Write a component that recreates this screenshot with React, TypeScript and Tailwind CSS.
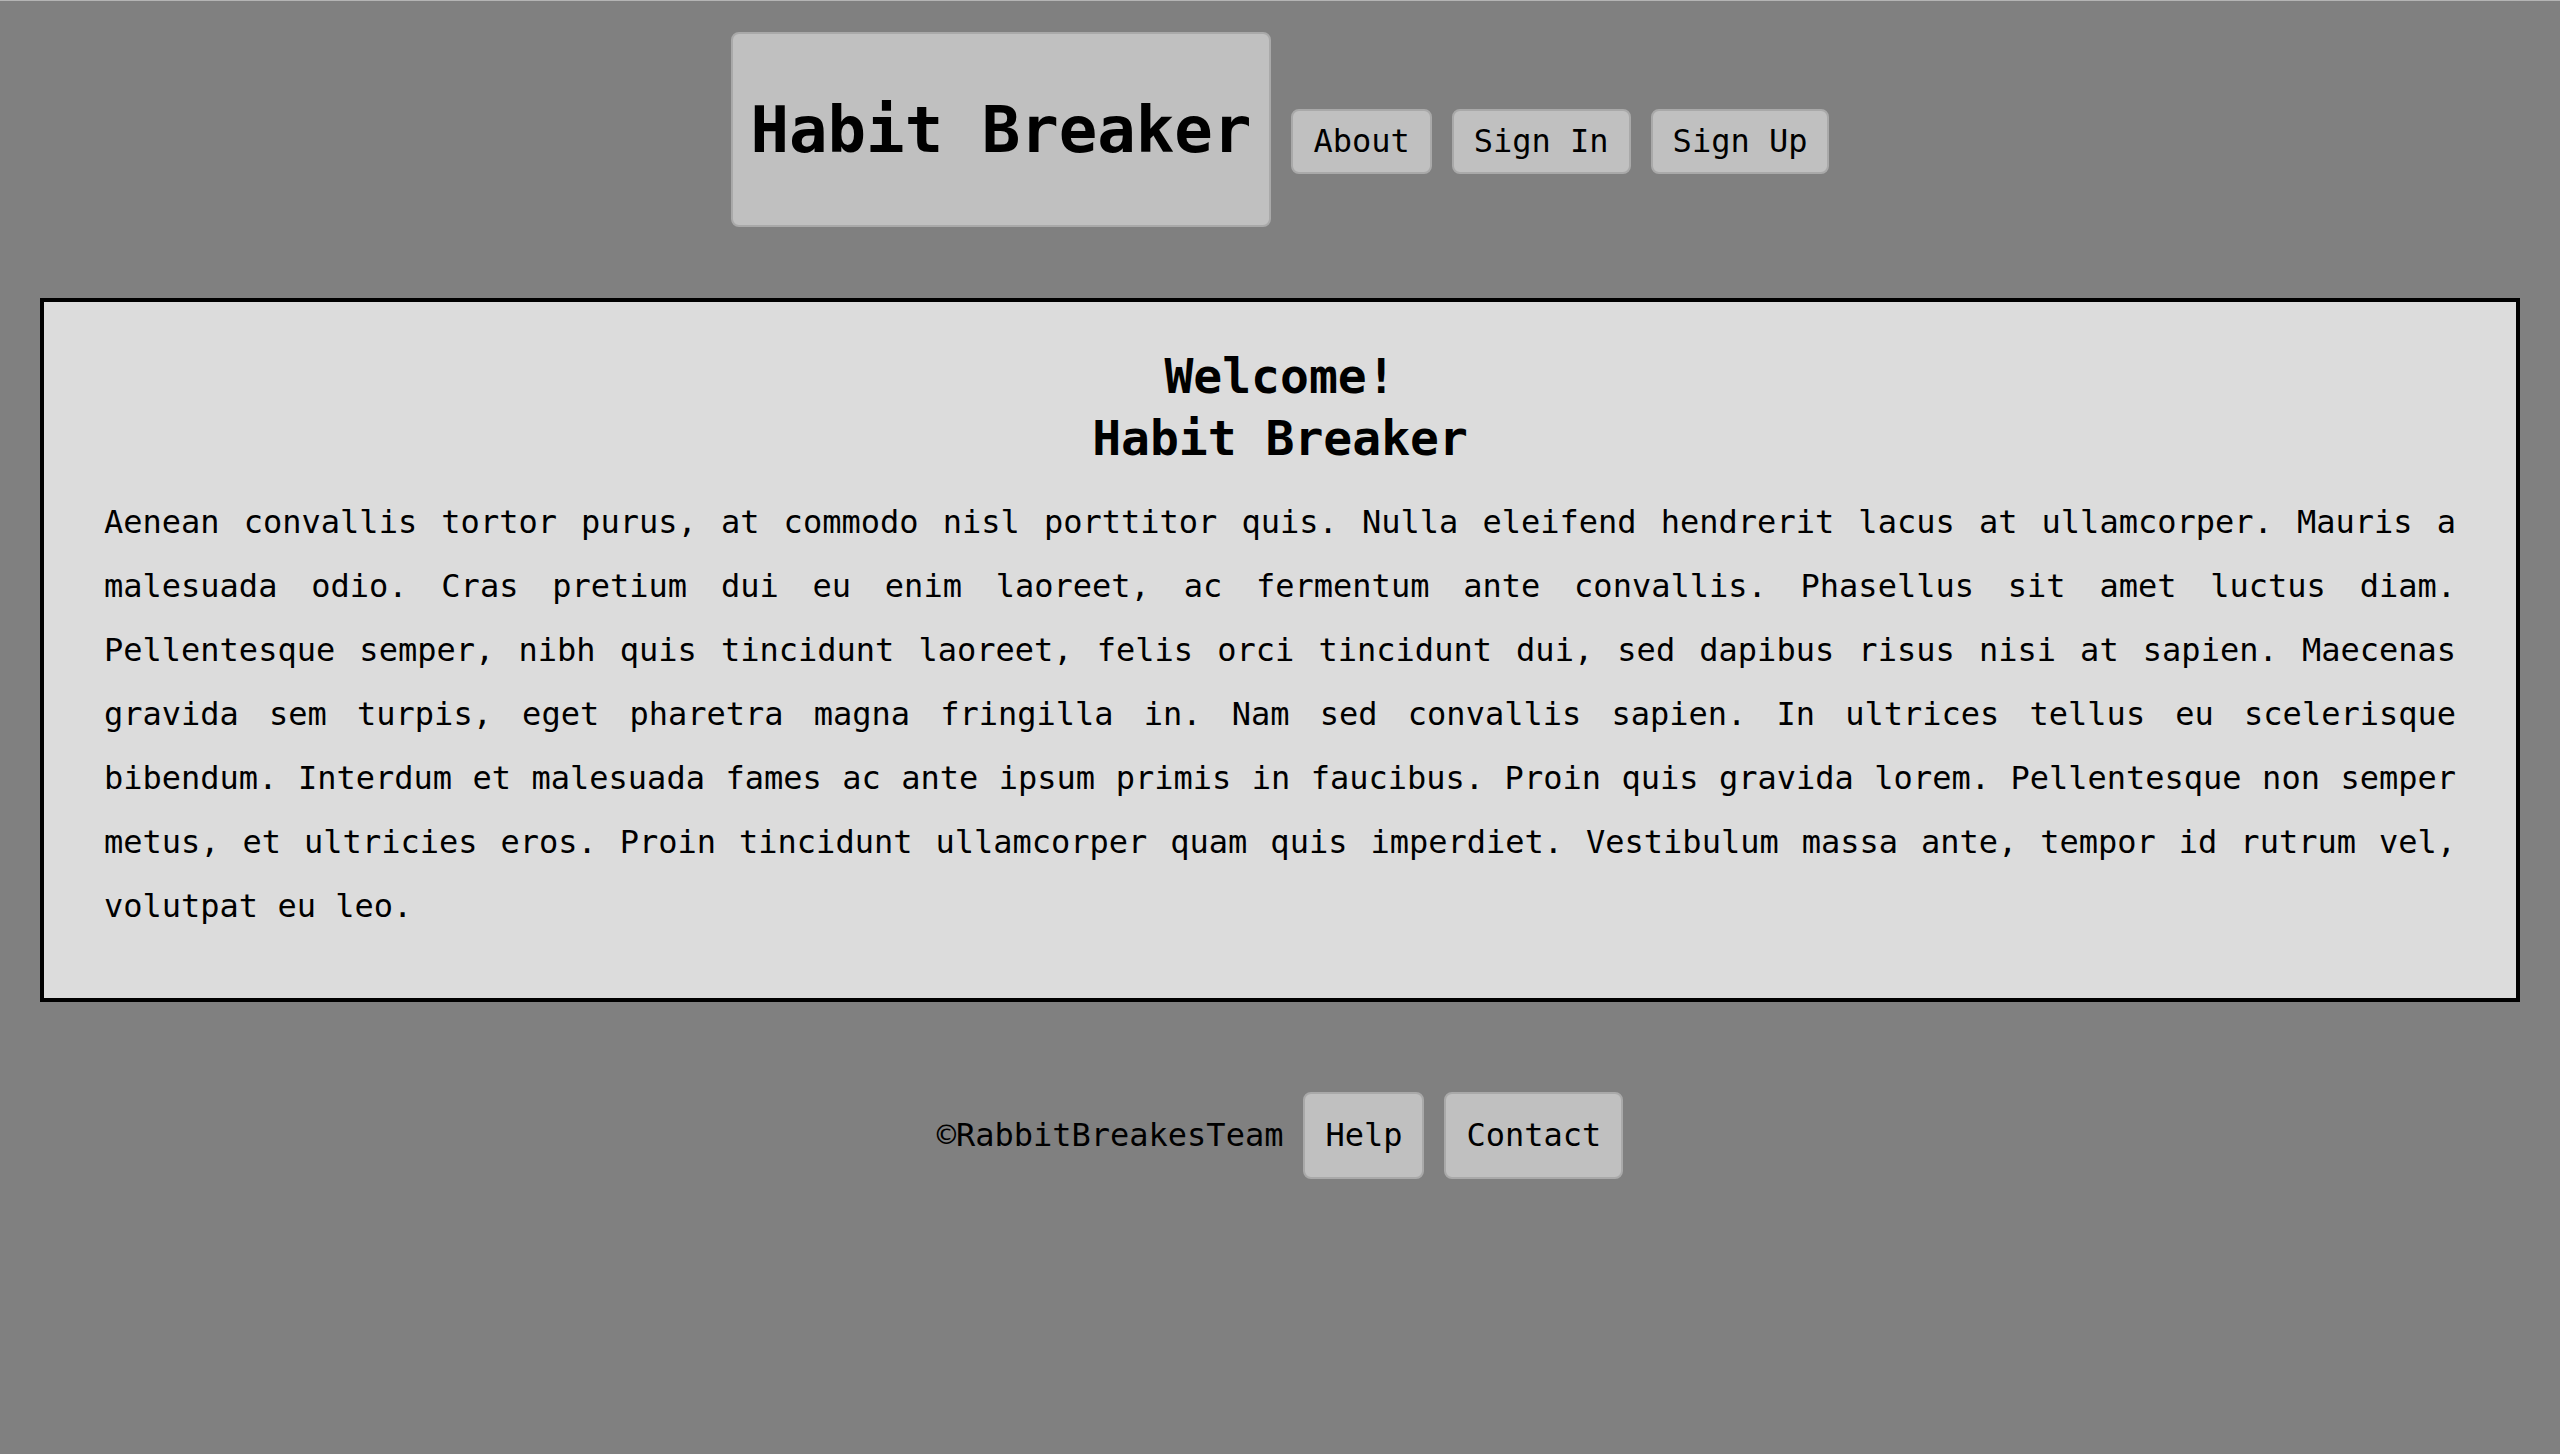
import React from "react";

const navLinks = ["About", "Sign In", "Sign Up"];
const footerLinks = ["Help", "Contact"];

const intro =
  "Aenean convallis tortor purus, at commodo nisl porttitor quis. Nulla eleifend hendrerit lacus at ullamcorper. Mauris a malesuada odio. Cras pretium dui eu enim laoreet, ac fermentum ante convallis. Phasellus sit amet luctus diam. Pellentesque semper, nibh quis tincidunt laoreet, felis orci tincidunt dui, sed dapibus risus nisi at sapien. Maecenas gravida sem turpis, eget pharetra magna fringilla in. Nam sed convallis sapien. In ultrices tellus eu scelerisque bibendum. Interdum et malesuada fames ac ante ipsum primis in faucibus. Proin quis gravida lorem. Pellentesque non semper metus, et ultricies eros. Proin tincidunt ullamcorper quam quis imperdiet. Vestibulum massa ante, tempor id rutrum vel, volutpat eu leo.";

const App: React.FC = () => {
  return (
    <div className="min-h-screen bg-[#808080] border-t border-[#b4b4b4] text-black font-['DejaVu_Sans_Mono',monospace]">
      {/* header */}
      <header className="flex justify-center items-baseline gap-5 pt-[31px]">
        <div className="h-[195px] px-[18px] flex items-center bg-[#c0c0c0] border-2 border-[#a9a9a9] rounded-lg">
          <h1 className="text-[64px] leading-none font-bold">Habit Breaker</h1>
        </div>
        {navLinks.map((link) => (
          <button
            key={link}
            className="px-5 py-3 text-[32px] leading-[37px] bg-[#c0c0c0] border-2 border-[#a9a9a9] rounded-lg"
          >
            {link}
          </button>
        ))}
      </header>

      {/* content */}
      <main className="mx-10 mt-[71px] border-4 border-black bg-[#dcdcdc] px-[60px] pt-[43px] pb-[60px]">
        <h2 className="text-center text-[48px] leading-[62px] font-bold">
          Welcome!
          <br />
          Habit Breaker
        </h2>
        <p className="mt-[21px] text-[32px] leading-[64px] text-justify">{intro}</p>
      </main>

      {/* footer */}
      <footer className="flex justify-center items-baseline gap-5 mt-[90px]">
        <span className="text-[32px] leading-[37px]">©RabbitBreakesTeam</span>
        {footerLinks.map((link) => (
          <button
            key={link}
            className="px-5 py-[23px] text-[32px] leading-[37px] bg-[#c0c0c0] border-2 border-[#a9a9a9] rounded-lg"
          >
            {link}
          </button>
        ))}
      </footer>
    </div>
  );
};

export default App;
